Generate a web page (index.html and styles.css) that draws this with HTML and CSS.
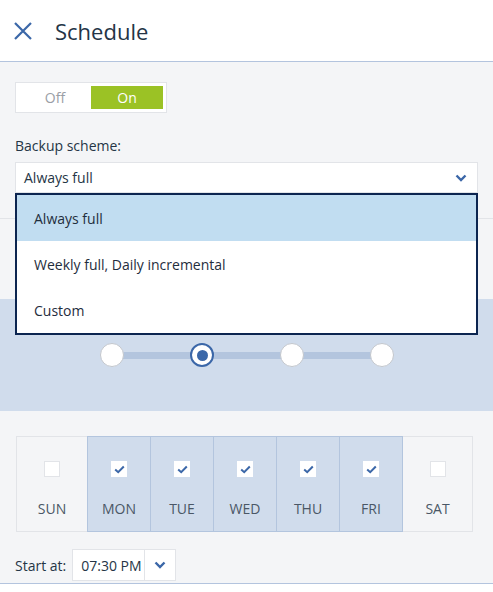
FILE: index.html
```html
<!DOCTYPE html>
<html>
<head>
<meta charset="utf-8">
<link rel="stylesheet" href="styles.css">
</head>
<body>
<header class="header">
  <svg class="close" width="20" height="20" viewBox="0 0 20 20"><path d="M2 2 L18 18 M18 2 L2 18" stroke="#3b67a8" stroke-width="2.2" fill="none"/></svg>
  <h1 class="title">Schedule</h1>
</header>
<main class="main">
  <div class="top">
    <div class="toggle">
      <span class="seg off">Off</span>
      <span class="seg on">On</span>
    </div>
    <div class="label">Backup scheme:</div>
    <div class="select-wrap">
      <div class="select">
        <span>Always full</span>
        <svg class="chev" width="12" height="8" viewBox="0 0 12 8"><path d="M1.5 1.5 L6 6 L10.5 1.5" stroke="#3b67a8" stroke-width="2.4" fill="none"/></svg>
      </div>
      <ul class="menu">
        <li class="item active">Always full</li>
        <li class="item">Weekly full, Daily incremental</li>
        <li class="item">Custom</li>
      </ul>
    </div>
  </div>
  <div class="sep"></div>
  <div class="gap"></div>
  <div class="band">
    <div class="slider">
      <div class="track"></div>
      <span class="dot"></span>
      <span class="dot sel"></span>
      <span class="dot"></span>
      <span class="dot"></span>
    </div>
  </div>
  <div class="days">
    <div class="day"><span class="cb"></span><span class="dname">SUN</span></div>
    <div class="day checked"><span class="cb"><svg width="11" height="9" viewBox="0 0 11 9"><path d="M1.2 4.5 L4.2 7.2 L9.8 1.5" stroke="#3b67a8" stroke-width="2" fill="none"/></svg></span><span class="dname">MON</span></div>
    <div class="day checked"><span class="cb"><svg width="11" height="9" viewBox="0 0 11 9"><path d="M1.2 4.5 L4.2 7.2 L9.8 1.5" stroke="#3b67a8" stroke-width="2" fill="none"/></svg></span><span class="dname">TUE</span></div>
    <div class="day checked"><span class="cb"><svg width="11" height="9" viewBox="0 0 11 9"><path d="M1.2 4.5 L4.2 7.2 L9.8 1.5" stroke="#3b67a8" stroke-width="2" fill="none"/></svg></span><span class="dname">WED</span></div>
    <div class="day checked"><span class="cb"><svg width="11" height="9" viewBox="0 0 11 9"><path d="M1.2 4.5 L4.2 7.2 L9.8 1.5" stroke="#3b67a8" stroke-width="2" fill="none"/></svg></span><span class="dname">THU</span></div>
    <div class="day checked"><span class="cb"><svg width="11" height="9" viewBox="0 0 11 9"><path d="M1.2 4.5 L4.2 7.2 L9.8 1.5" stroke="#3b67a8" stroke-width="2" fill="none"/></svg></span><span class="dname">FRI</span></div>
    <div class="day"><span class="cb"></span><span class="dname">SAT</span></div>
  </div>
  <div class="start">
    <span class="start-label">Start at:</span>
    <div class="time">
      <span class="time-val">07:30 PM</span>
      <span class="time-btn"><svg width="12" height="8" viewBox="0 0 12 8"><path d="M1.5 1.5 L6 6 L10.5 1.5" stroke="#3b67a8" stroke-width="2.4" fill="none"/></svg></span>
    </div>
  </div>
</main>
<div class="footer"></div>
</body>
</html>
```
FILE: styles.css
```css
* { box-sizing: border-box; }
html, body { margin: 0; padding: 0; }
body {
  width: 493px;
  height: 592px;
  overflow: hidden;
  background: #ffffff;
  font-family: "Open Sans", "Noto Sans", sans-serif;
  font-size: 14px;
  color: #253546;
}
.header {
  height: 62px;
  background: #fff;
  border-bottom: 1px solid #b3c4de;
  display: flex;
  align-items: center;
  padding-left: 13px;
}
.close { display: block; margin-top: 0; }
.title {
  margin: 0 0 0 22px;
  font-size: 22px;
  font-weight: 400;
  color: #243446;
  line-height: 30px;
}
.main {
  background: #f4f5f7;
  border-bottom: 1px solid #b3c4de;
  height: 522px;
}
.top { padding: 20px 15px 0 15px; }
.toggle {
  width: 152px;
  height: 31px;
  background: #fff;
  border: 1px solid #e2e4e8;
  padding: 3px;
  display: flex;
}
.seg {
  width: 72px;
  height: 23px;
  display: flex;
  align-items: center;
  justify-content: center;
  font-size: 14px;
}
.off { color: #9a9ea6; }
.on { background: #9bc225; color: #fff; margin-left: 0; }
.label {
  margin-top: 23px;
  line-height: 20px;
  color: #253546;
}
.select-wrap { position: relative; margin-top: 6px; }
.select {
  height: 31px;
  background: #fff;
  border: 1px solid #e2e4e8;
  display: flex;
  align-items: center;
  justify-content: space-between;
  padding: 0 10px 0 8px;
  width: 463px;
}
.chev { display: block; }
.menu {
  position: absolute;
  left: 0;
  top: 31px;
  width: 463px;
  margin: 0;
  padding: 0;
  list-style: none;
  background: #fff;
  border: 2px solid #0c2550;
  z-index: 10;
}
.item {
  height: 46px;
  display: flex;
  align-items: center;
  padding-left: 17px;
  color: #1f2d3d;
}
.item.active { background: #c1ddf1; }
.sep {
  margin-top: 25px;
  height: 1px;
  background: #e2e4e8;
}
.gap { height: 80px; }
.band {
  height: 112px;
  background: #d0dcec;
  display: flex;
  align-items: center;
  padding-left: 100px;
}
.slider {
  position: relative;
  display: flex;
  gap: 66px;
  align-items: center;
}
.track {
  position: absolute;
  left: 12px;
  right: 12px;
  top: 50%;
  height: 7px;
  margin-top: -3.5px;
  background: #b3c5de;
}
.dot {
  position: relative;
  width: 24px;
  height: 24px;
  border-radius: 50%;
  background: #fff;
  border: 1.5px solid #c3c7cd;
  display: flex;
  align-items: center;
  justify-content: center;
}
.dot.sel { border: 2px solid #3b67a8; }
.dot.sel::after {
  content: "";
  width: 11px;
  height: 11px;
  border-radius: 50%;
  background: #3b67a8;
}
.days {
  display: flex;
  margin: 25px 0 0 16px;
}
.day {
  position: relative;
  width: 64px;
  height: 96px;
  border: 1px solid #e2e4e8;
  margin-left: -1px;
  display: flex;
  flex-direction: column;
  align-items: center;
  padding-top: 24px;
}
.day:first-child { width: 72px; margin-left: 0; }
.day:last-child { width: 71px; }
.day.checked { background: #d0dcec; border-color: #b3c5de; z-index: 1; }
.cb {
  width: 16px;
  height: 16px;
  background: #fff;
  border: 1px solid #e2e4e8;
  display: flex;
  align-items: center;
  justify-content: center;
}
.day.checked .cb { border-color: #fff; }
.cb svg { display: block; }
.dname {
  margin-top: 22px;
  font-size: 14px;
  color: #4a5766;
  line-height: 20px;
}
.start {
  display: flex;
  align-items: center;
  margin: 17px 0 0 15px;
}
.start-label { color: #253546; }
.time {
  margin-left: 6px;
  height: 32px;
  display: flex;
  background: #fff;
  border: 1px solid #e2e4e8;
}
.time-val {
  width: 72px;
  display: flex;
  align-items: center;
  padding-left: 8px;
  border-right: 1px solid #e2e4e8;
  color: #253546;
}
.time-btn {
  width: 30px;
  display: flex;
  align-items: center;
  justify-content: center;
}
.footer { height: 8px; background: #fff; }
```
